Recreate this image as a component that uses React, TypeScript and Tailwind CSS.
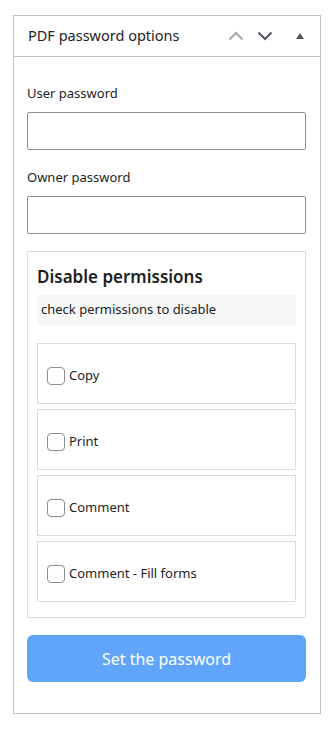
import React from "react";

const perms = ["Copy", "Print", "Comment", "Comment - Fill forms"];

export default function App() {
  return (
    <div className="min-h-[729px] w-[329px] bg-white pt-[15px]" style={{ fontFamily: '"Noto Sans", "Open Sans", sans-serif' }}>
      <div className="ml-[13px] w-[308px] border border-[#c3c4c7] bg-white">
        <div className="flex h-[41px] items-center border-b border-[#c3c4c7] pl-[14px] pr-[16px]">
          <h2 className="flex-1 text-[14.5px] font-normal text-[#1d2327]">PDF password options</h2>
          <div className="flex items-center">
            <svg width="16" height="10" viewBox="0 0 16 10" className="mr-[13px]">
              <path d="M1.5 8.5 L8 2 L14.5 8.5" fill="none" stroke="#a7aaad" strokeWidth="2" />
            </svg>
            <svg width="16" height="10" viewBox="0 0 16 10" className="mr-[23px]">
              <path d="M1.5 1.5 L8 8 L14.5 1.5" fill="none" stroke="#50575e" strokeWidth="2" />
            </svg>
            <svg width="8" height="6" viewBox="0 0 8 6">
              <path d="M0 6 L4 0 L8 6 Z" fill="#50575e" />
            </svg>
          </div>
        </div>
        <div className="pb-[31px] pl-[13px] pr-[14px] pt-[26px]">
          <label className="block text-[13px] leading-[20px] text-[#1e1e1e]">User password</label>
          <input type="password" className="mt-[9px] block h-[38px] w-full rounded-[2px] border border-[#8c8f94] bg-white" />
          <label className="mt-[17px] block text-[13px] leading-[20px] text-[#1e1e1e]">Owner password</label>
          <input type="password" className="mt-[9px] block h-[38px] w-full rounded-[2px] border border-[#8c8f94] bg-white" />
          <div className="mt-[17px] border border-[#dcdcde] px-[9px] pb-[15px] pt-[12px]">
            <h3 className="text-[17px] font-semibold leading-[26px] text-[#1e1e1e]">Disable permissions</h3>
            <p className="mt-[5px] flex h-[30px] items-center bg-[#f6f7f7] px-[4px] text-[13px] text-[#1e1e1e]">check permissions to disable</p>
            <div className="mt-[18px] flex flex-col gap-[5px]">
              {perms.map((p) => (
                <label key={p} className="flex h-[61px] items-center border border-[#dcdcde] pl-[9px] pt-[5px] text-[13px] text-[#1e1e1e]">
                  <input type="checkbox" className="mr-[4px] h-[18px] w-[18px] appearance-none rounded-[4px] border border-[#8c8f94] bg-white" />
                  {p}
                </label>
              ))}
            </div>
          </div>
          <button className="mt-[17px] flex h-[47px] w-full items-center justify-center rounded-[6px] bg-[#60a5fa] text-[16px] text-white">
            Set the password
          </button>
        </div>
      </div>
    </div>
  );
}
